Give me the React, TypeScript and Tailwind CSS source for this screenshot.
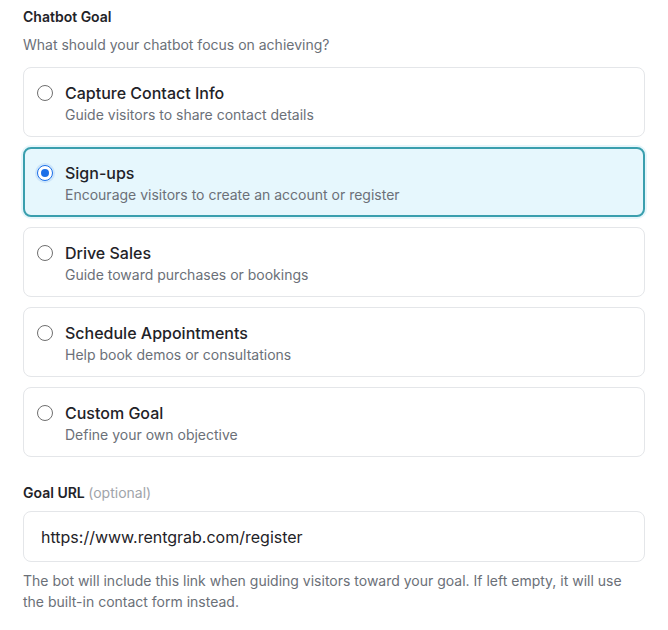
import { useState } from 'react';

const goals = [
  { id: 'contact', title: 'Capture Contact Info', desc: 'Guide visitors to share contact details' },
  { id: 'signups', title: 'Sign-ups', desc: 'Encourage visitors to create an account or register' },
  { id: 'sales', title: 'Drive Sales', desc: 'Guide toward purchases or bookings' },
  { id: 'appointments', title: 'Schedule Appointments', desc: 'Help book demos or consultations' },
  { id: 'custom', title: 'Custom Goal', desc: 'Define your own objective' },
];

export default function App() {
  const [goal, setGoal] = useState('signups');
  const [url, setUrl] = useState('https://www.rentgrab.com/register');

  return (
    <div className="min-h-screen bg-white px-[23px] pt-[7px] font-['Inter',sans-serif] text-gray-900">
      {/* Header */}
      <h2 className="text-sm leading-5 font-semibold text-[#1f2328]">Chatbot Goal</h2>
      <p className="mt-2 text-sm leading-5 text-[#6b7078]">What should your chatbot focus on achieving?</p>

      {/* Opções */}
      <div className="mt-3 flex flex-col gap-2.5">
        {goals.map(g => {
          const active = goal === g.id;
          return (
            <button
              key={g.id}
              type="button"
              onClick={() => setGoal(g.id)}
              className={
                active
                  ? 'flex items-start gap-3 rounded-lg border-2 border-[#3a9fae] bg-[#e6f7fd] pl-[12px] pt-[12px] pb-[10px] text-left ring-2 ring-[#e6f6fb]'
                  : 'flex items-start gap-3 rounded-lg border border-[#e4e6e9] bg-white pl-[13px] pt-[13px] pb-[11px] text-left'
              }
            >
              <span
                className={
                  active
                    ? 'mt-1 flex h-4 w-4 shrink-0 items-center justify-center rounded-full border-[1.5px] border-[#1b6fe8] bg-white shadow-[0_0_0_2px_rgba(27,111,232,0.12)]'
                    : 'mt-1 h-4 w-4 shrink-0 rounded-full border border-[#6f6f6f] bg-white'
                }
              >
                {active && <span className="h-2 w-2 rounded-full bg-[#1b6fe8]" />}
              </span>
              <span className="flex flex-col">
                <span className="text-base leading-6 font-medium text-[#1f2328]">{g.title}</span>
                <span className="text-sm leading-5 text-[#6b7078]">{g.desc}</span>
              </span>
            </button>
          );
        })}
      </div>

      {/* Goal URL */}
      <label className="mt-[26px] block text-sm leading-5 font-semibold text-[#1f2328]">
        Goal URL <span className="font-normal text-[#a0a4aa]">(optional)</span>
      </label>
      <input
        value={url}
        onChange={e => setUrl(e.target.value)}
        className="mt-2 block h-[51px] w-full rounded-lg border border-[#e4e6e9] bg-white px-[17px] text-base text-[#1f2328] outline-none"
      />
      <p className="mt-2 text-sm leading-[21px] text-[#6b7078]">
        The bot will include this link when guiding visitors toward your goal. If left empty, it will use the built-in contact form instead.
      </p>
    </div>
  );
}
